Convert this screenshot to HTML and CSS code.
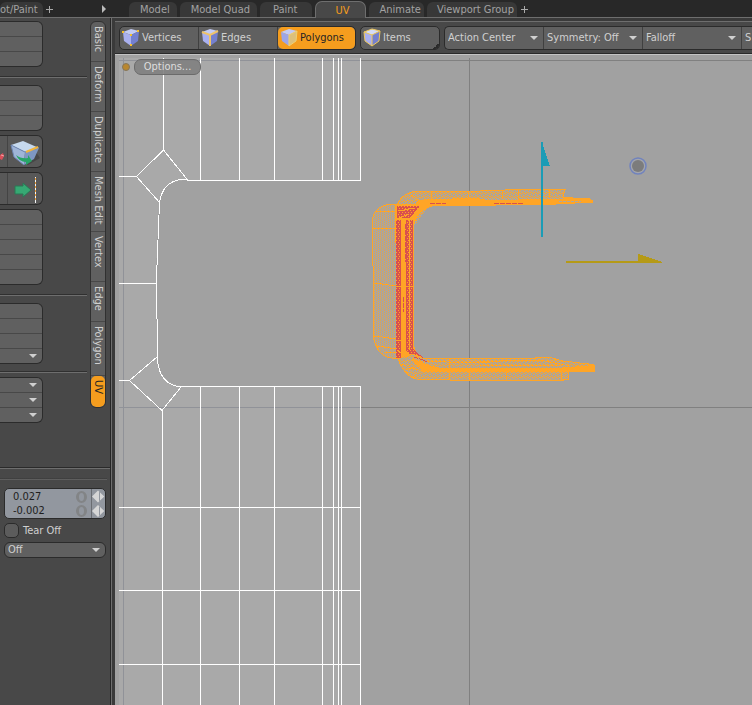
FILE: index.html
```html
<!DOCTYPE html>
<html lang="en">
<head>
<meta charset="utf-8">
<title>UV Layout</title>
<link rel="stylesheet" href="styles.css">
</head>
<body>
<header class="topbar">
  <div class="topbar-left">
    <button class="tab tab-first">ot/Paint</button>
    <button class="plus" aria-label="Add tab"></button>
    <button class="more" aria-label="More tabs"></button>
  </div>
  <nav class="tabs">
    <button class="tab">Model</button>
    <button class="tab">Model Quad</button>
    <button class="tab tab-wide">Paint</button>
    <button class="tab tab-on">UV</button>
    <button class="tab tab-slim">Animate</button>
    <button class="tab tab-slim">Viewport Group</button>
    <button class="plus" aria-label="Add layout"></button>
  </nav>
</header>
<main class="work">
  <aside class="side">
    <div class="side-top">
      <div class="tools">
        <div class="box"><button aria-label="Tool"></button><button aria-label="Tool"></button><button aria-label="Tool"></button></div>
        <hr>
        <div class="box"><button aria-label="Tool"></button><button aria-label="Tool"></button><button aria-label="Tool"></button></div>
        <div class="box box-icons">
          <button class="half" aria-label="Tool"><svg width="7" height="30" viewBox="0 0 7 30"><path d="M0 18l3-2 1 3-2 4-2-1z" fill="#d8505a"/><path d="M1 18l3 1" stroke="#f2a0a4"/></svg></button>
          <button aria-label="Edge extrude"><svg width="34" height="30" viewBox="0 0 34 30">
            <path d="M10 23l10 5 12-7-4-6z" fill="#3b3b3b" opacity=".6"/>
            <path d="M3 8L15 4l16 7-14 4z" fill="#c6d9ee"/><path d="M3 8l14 7-1 13L6 20z" fill="#9fb5d8"/><path d="M17 15l14-4-5 11-10 6z" fill="#7e97c2"/>
            <path d="M3 8l14 7 14-4M3 8l3 12 10 8" fill="none" stroke="#6e86b2"/><path d="M18 15l12-5" stroke="#f0b43c" stroke-width="2"/>
            <path d="M8 18q5 4 12 3v-3l4 6-6 4v-3q-7 0-10-7z" fill="#27a567"/>
          </svg></button>
        </div>
        <div class="box box-icons">
          <button class="half" aria-label="Tool"></button>
          <button aria-label="Move"><svg width="34" height="30" viewBox="0 0 34 30"><path d="M7 12h8V9l8 7-8 7v-3H7z" fill="#36a873" stroke="#2b7655"/><path d="M27.500 3v26" stroke="#f4f4f4"/><path d="M27.500 4v24" stroke="#e79a35" stroke-dasharray="2 2"/></svg></button>
        </div>
        <div class="box"><button aria-label="Tool"></button><button aria-label="Tool"></button><button aria-label="Tool"></button><button aria-label="Tool"></button><button aria-label="Tool"></button></div>
        <hr>
        <div class="box"><button aria-label="Tool"></button><button aria-label="Tool"></button><button aria-label="Tool"></button><button class="menu" aria-label="Menu"></button></div>
        <hr class="tight">
        <div class="box"><button class="menu" aria-label="Menu"></button><button class="menu" aria-label="Menu"></button><button class="menu" aria-label="Menu"></button></div>
      </div>
      <nav class="vtabs">
        <button class="vt vt-1">Basic</button>
        <button class="vt vt-2">Deform</button>
        <button class="vt vt-3">Duplicate</button>
        <button class="vt vt-3">Mesh Edit</button>
        <button class="vt vt-2">Vertex</button>
        <button class="vt vt-1">Edge</button>
        <button class="vt vt-4">Polygon</button>
        <button class="vt vt-on">UV</button>
      </nav>
    </div>
    <div class="side-bottom">
      <div class="values">
        <label><input type="text" value="0.027" aria-label="U"><i class="ring"></i><span class="spin"></span></label>
        <label><input type="text" value="-0.002" aria-label="V"><i class="ring"></i><span class="spin"></span></label>
      </div>
      <label class="check"><input type="checkbox">Tear Off</label>
      <div class="drop drop-round"><select aria-label="Mode"><option>Off</option></select></div>
    </div>
  </aside>
  <section class="pane">
    <div class="toolbar">
      <div class="group modes">
        <button><svg width="22" height="22" viewBox="0 0 22 22"><path d="M3 5l8-3 8 2-8 4z" fill="#c3cbf4"/><path d="M3 5l8 3v11l-7-5z" fill="#a9b0f0"/><path d="M11 8l8-4-1 10-7 5z" fill="#7480cf"/><g fill="#f5c02c"><path d="M2 4h2v2H2zM17 3h2v2h-2zM10 7h2v2h-2zM10 17h2v2h-2z"/></g></svg>Vertices</button>
        <button><svg width="22" height="22" viewBox="0 0 22 22"><path d="M3 5l8-3 8 2-8 4z" fill="#c3cbf4"/><path d="M3 5l8 3v11l-7-5z" fill="#a9b0f0"/><path d="M11 8l8-4-1 10-7 5z" fill="#7480cf"/><path d="M3 5l8 3 8-4M11 8v11" fill="none" stroke="#eec36a" stroke-width="2"/></svg>Edges</button>
        <button class="on"><svg width="22" height="22" viewBox="0 0 22 22"><path d="M3 5l8-3 8 2-8 4z" fill="#c3cbf4"/><path d="M3 5l8 3v11l-7-5z" fill="#9da6e8"/><path d="M11 8l8-4-1 10-7 5z" fill="#dcc07c" stroke="#f0d070"/></svg>Polygons</button>
      </div>
      <div class="group single">
        <button><svg width="22" height="22" viewBox="0 0 22 22"><path d="M3 5l8-3 8 2-8 4z" fill="#d4dcf8"/><path d="M3 5l8 3v11l-7-5z" fill="#a9b0f0"/><path d="M11 8l8-4-1 10-7 5z" fill="#7480cf"/><path d="M3 5l8-3 8 2-8 4zM3 5l1 9 7 5 7-5 1-10M11 8v11" fill="none" stroke="#efc95c"/></svg>Items</button>
      </div>
      <div class="group drops">
        <div class="drop"><select aria-label="Action Center"><option>Action Center</option></select></div>
        <div class="drop"><select aria-label="Symmetry"><option>Symmetry: Off</option></select></div>
        <div class="drop"><select aria-label="Falloff"><option>Falloff</option></select></div>
        <div class="drop"><select aria-label="Snapping"><option>S</option></select></div>
      </div>
    </div>
    <div class="view">
      <svg class="canvas" viewBox="119 58 633 647" preserveAspectRatio="xMinYMin slice" shape-rendering="crispEdges">
        <defs>
          <pattern id="mesh" width="4" height="4" patternUnits="userSpaceOnUse"><g shape-rendering="auto"><path d="M0 0h4v4H0z" fill="#a5a5a5"/><path d="M0 0h1v1H0zM3 0h1v1H3zM1 1h2v1H1zM0 2h1v1H0zM2 3h1v1H2z" fill="#ffa526"/></g></pattern>
          <pattern id="side" width="4" height="4" patternUnits="userSpaceOnUse"><g shape-rendering="auto"><path d="M0 0h4v4H0z" fill="#a7a5a2"/><path d="M0 0h1v1H0zM2 1h1v1H2zM0 2h1v1H0zM2 3h1v1H2z" fill="#f0a43c"/></g></pattern>
          <pattern id="red" width="3" height="4" patternUnits="userSpaceOnUse"><g shape-rendering="auto"><path d="M0 0h3v4H0z" fill="#d9504e"/><path d="M0 0h1v1H0zM2 2h1v1H2z" fill="#ffa526"/></g></pattern>
        </defs>
        <path d="M119 58H361V180H190Q161 180 159 203L156 270V283L157 357Q160 386 186 386H361V705H119z" fill="#a9a9a9"/>
        <path d="M119 60.500H361M123.500 58V705M119 407.500H361" stroke="#909298" fill="none"/>
        <path d="M361 60.500H900M469.500 58V900M361 407.500H900" stroke="#808080" fill="none"/>
        <g fill="none" stroke="#fff">
          <path d="M163.500 58V150L136.500 176.500L160 203M119 176.500H136M163.500 150L188 180.500H361M188 180L186 179.500H180Q162 183 159.500 203L158.500 227L157.500 253L156.500 278V307L157.500 330V361Q160 382 176 386L180 386.500H361M119 283.500H157M157 357L129.500 380.500L162 410.500L181 387M119 380.500H129M162 410V425L162.500 705"/>
          <path d="M200.500 58V180M239.500 58V180M274.500 58V180M322.500 58V180M333.500 58V180M338.500 58V180M341.500 58V180M360.500 58V181"/>
          <path d="M200.500 386V705M239.500 386V705M274.500 386V705M322.500 386V705M333.500 386V705M338.500 386V705M341.500 386V705M360.500 386V705M119 507.500H361M119 590.500H361M119 664.500H361"/>
        </g>
        <g>
          <path d="M398 204H388Q373 208 373 221V264L374 268V338Q378 357 392 358H398z" fill="url(#side)"/>
          <path d="M398 204.500H388Q372.500 208 372.500 221V264L373.500 268V338Q378 357 392 358H398" fill="none" stroke="#ffa526"/>
          <path d="M376 211.500H397M373 228L397 229M374 283L397 286M374 336L397 339M377 346L397 349M385 352.500H397" fill="none" stroke="#ffa526"/>
          <path d="M397 205Q404 191 417 191H468L518 190H565L563 197L573 198V204H430L414 226V210z" fill="url(#mesh)"/>
          <path d="M397 204.500Q404 191.500 417 191.500H468L518 189.500H565L563 197L573 198" fill="none" stroke="#ffa526"/>
          <path d="M426 199L480 198H573L589 198L591 200H593V203L556 204V205H496V206H434Q416 210 414 226L408 216Q413 201 426 199z" fill="#ffa526"/>
          <path d="M430 203.500H446M494 203.500H523" stroke="#d9504e" stroke-dasharray="5 1"/>
          <path d="M480 198.500H564M485 199.500H518M559 201.500H581" stroke="#a7a7a7" stroke-dasharray="3 1"/>
          <path d="M468.500 191V199M502.500 190V199M518.500 190V199M549.500 190V198M431.500 191V201M411 195L422 203" stroke="#ffa526"/>
          <path d="M395 204H424L414 222V345Q416 356 427 361L414 364L397 358z" fill="#ffa526"/>
          <path d="M396 220H401V358H396zM406 220H409V340H406zM410 220H413V340H410z" fill="url(#red)"/>
          <path d="M397 206H420L410 218H397zM406 335H413V349L427 361H417L406 351z" fill="url(#red)"/>
          <path d="M398 211L415 208M399 218L409 214M396 286.500H414M397 340H404M397 350L406 356M409.500 223V350" stroke="#ffa526" fill="none"/>
          <path d="M405.500 224V262M403.500 297V312" stroke="#d9504e" stroke-dasharray="5 1"/>
          <path d="M398 359Q406 380 422 379H450V380H563V379H568V371H594V365L589 364L563 361L548 358H535V359H423L413 354z" fill="url(#mesh)"/>
          <path d="M398 359Q406 380 422 379.500H450V380.500H563V379H568V371H594V365L589 364L563 361L548 357H535V358.500H423L413 354z" fill="none" stroke="#ffa526"/>
          <path d="M413 358L426 364L440 368H555L594 365V372H425L412 361z" fill="#ffa526"/>
          <path d="M424 361.500L490 363M480 365.500H560M480 361.500L540 360L570 366M401 364L425 372M405 370L425 364M412 377L426 369M506.500 371V380M469.500 372V380M449.500 358V380M561.500 371V380" fill="none" stroke="#ffa526"/>
          <path d="M414 357L428 362" stroke="#d9504e" stroke-dasharray="4 1"/>
        </g>
        <path d="M541 142h2v4l7 20h-7v71h-2z" fill="#1b9cb6"/>
        <path d="M566 261h72v-7l24 8v1h-96z" fill="#b59a17"/>
        <g shape-rendering="auto"><circle cx="638" cy="166" r="8" fill="#a3a5ac" stroke="#7183bd" stroke-width="1.500"/><circle cx="638" cy="166" r="6" fill="#7c7c7c"/></g>
      </svg>
      <div class="overlay"><i class="dot"></i><button class="options">Options...</button></div>
    </div>
  </section>
</main>
</body>
</html>
```
FILE: styles.css
```css
* { box-sizing: border-box; }
html, body { height: 100%; margin: 0; }
body { display: flex; flex-direction: column; overflow: hidden; background: #484848; color: #d0d0d0; font: 11px/14px "DejaVu Sans Condensed", "Noto Sans", sans-serif; }
button, input, select { font: inherit; color: inherit; border: 0; padding: 0; margin: 0; background: none; appearance: none; outline: 0; border-radius: 0; }
button { white-space: nowrap; }

.topbar { display: flex; flex: none; height: 18px; background: #282828; border-bottom: 1px solid #6e6e6e; }
.topbar-left { display: flex; align-items: flex-end; width: 129px; flex: none; }
.tabs { display: flex; align-items: flex-end; gap: 3px; }
.tab { height: 15px; padding: 0 7px 0 11px; background: #383838; color: #a2a2a2; border-radius: 6px 6px 0 0; line-height: 15px; }
.tab-wide { padding: 0 15px 0 13px; }
.tab-first { padding: 0 7px 0 0; width: 43px; text-align: right; }
.tab-slim { padding: 0 3px 0 10px; }
.tab-on { height: 17px; padding: 0 16px 0 19px; margin-bottom: -1px; background: #484848; color: #f49c1c; border: 1px solid #6e6e6e; border-bottom: 0; border-radius: 7px 7px 0 0; }
.plus { width: 7px; height: 7px; margin: 0 3px 4px; background: linear-gradient(#aaa, #aaa) 3px 0 / 1px 7px no-repeat, linear-gradient(#aaa, #aaa) 0 3px / 7px 1px no-repeat; }
.tabs .plus { margin-left: 1px; }
.more { width: 4px; height: 8px; margin: 0 0 4px 46px; background: #bbb; clip-path: polygon(0 0, 100% 50%, 0 100%); }

.work { display: flex; flex: 1; min-height: 0; }
.side { flex: none; width: 111px; display: flex; flex-direction: column; border-right: 1px solid #262626; }
.side-top { display: flex; justify-content: space-between; height: 450px; flex: none; padding: 3px 4px 0 0; border-bottom: 1px solid #2a2a2a; }
.tools { width: 87px; }
.box { width: 43px; border: 1px solid #2b2b2b; border-left: 0; border-radius: 0 6px 6px 0; background: #606060; overflow: hidden; margin-bottom: 4px; }
.box button { display: block; width: 100%; height: 15px; border-bottom: 1px solid #484848; }
.box button:last-child { height: 14px; border-bottom: 0; }
.box .menu { position: relative; }
.menu::after, .drop::after { content: ""; position: absolute; right: 5px; top: 5px; width: 8px; height: 4px; background: #d0d0d0; clip-path: polygon(0 0, 100% 0, 50% 100%); pointer-events: none; }
.box-icons { display: flex; height: 33px; background: #585858; }
.box-icons button, .box-icons button:last-child { flex: 1; height: 31px; border: 0; }
.box-icons .half { flex: none; width: 8px; border-right: 1px solid #444; }
.box-icons svg { display: block; }
.side hr { width: 87px; height: 2px; margin: 9px 0 7px; border: 0; background: #6e6e6e; border-top: 1px solid #303030; }
.side hr.tight { margin: 7px 0 4px; }
.vtabs { width: 16px; height: 387px; display: flex; flex-direction: column; border: 1px solid #303030; border-radius: 6px; background: #606060; overflow: hidden; }
.vt { writing-mode: vertical-rl; width: 14px; line-height: 14px; padding-top: 4px; border-bottom: 1px solid #484848; text-align: start; }
.vt-1 { height: 40px; }
.vt-2 { height: 50px; }
.vt-3 { height: 60px; }
.vt-4 { height: 54px; }
.vt-on { flex: 1; background: #f59d1e; color: #252525; border: 0; border-radius: 5px; }
.side-bottom { display: flex; flex-direction: column; gap: 4px; flex: 1; border-top: 1px solid #6e6e6e; padding: 19px 4px 0; background: linear-gradient(#303030, #6e6e6e) 0 9px / 107px 2px no-repeat; }
.values { border: 1px solid #2b2b2b; border-radius: 5px; background: #92979f; overflow: hidden; color: #1e1e1e; }
.values label { display: flex; align-items: center; height: 15px; }
.values label:last-child { height: 14px; }
.values input { flex: 1; min-width: 0; padding-left: 8px; height: 14px; }
.ring { width: 11px; height: 12px; border: 3px solid #828486; border-top-width: 2px; border-bottom-width: 2px; border-radius: 50%; margin-right: 4px; }
.spin { width: 14px; height: 15px; background: linear-gradient(#92979f, #92979f) 7px 0 / 1px 15px no-repeat, #d6d6d6; border-left: 1px solid #6a6d72; clip-path: polygon(0 0, 7% 0, 7% 50%, 50% 10%, 95% 50%, 50% 90%, 7% 50%, 7% 100%, 0 100%); }
.check { display: flex; align-items: center; gap: 4px; height: 15px; color: #d0d0d0; }
.check input { width: 15px; height: 15px; border: 1px solid #2b2b2b; border-radius: 5px; background: #5c5c5c; }
.drop { position: relative; }
.drop select { display: block; width: 100%; height: 100%; padding-left: 3px; }
.drop-round { height: 16px; border: 1px solid #2b2b2b; border-radius: 6px; background: #606060; }

.pane { flex: 1; min-width: 0; display: flex; flex-direction: column; border-left: 1px solid #6e6e6e; padding: 3px 0 0 3px; background: #3a3a3a; }
.toolbar { display: flex; flex: none; gap: 4px; height: 33px; padding: 4px 0 5px 4px; background: #484848; border-top: 1px solid #6e6e6e; border-bottom: 1px solid #2a2a2a; }
.group { display: flex; height: 24px; flex: none; border: 1px solid #2b2b2b; border-radius: 5px; background: #606060; overflow: hidden; }
.group button { display: flex; align-items: center; }
.modes { width: 237px; }
.modes button { flex: none; width: 79px; border-right: 1px solid #404040; }
.modes .on { flex: 1; background: #f59d1e; color: #252525; border: 0; border-radius: 5px; }
.single { width: 80px; }
.single button { width: 100%; background: linear-gradient(135deg, transparent 50%, #2b2b2b 50%) right bottom / 6px 6px no-repeat; }
.drops { flex: 1; border-right: 0; border-radius: 5px 0 0 5px; }
.drops .drop { flex: none; width: 99px; border-right: 1px solid #404040; }
.drops .drop::after { top: 9px; }

.view { position: relative; flex: 1; min-height: 0; padding: 3px 0 0 4px; background: #a1a1a1; border-top: 1px solid #c4c4c4; overflow: hidden; }
.canvas { display: block; width: 100%; height: 100%; }
.overlay { position: absolute; left: 7px; top: 4px; display: flex; align-items: center; gap: 4px; }
.dot { width: 8px; height: 8px; border-radius: 50%; background: #b9872f; border: 1px solid #85765a; }
.options { width: 67px; height: 16px; border: 1px solid #6b6b6b; border-radius: 7px; background: rgba(128, 128, 128, .9); color: #dedede; line-height: 14px; }
```
